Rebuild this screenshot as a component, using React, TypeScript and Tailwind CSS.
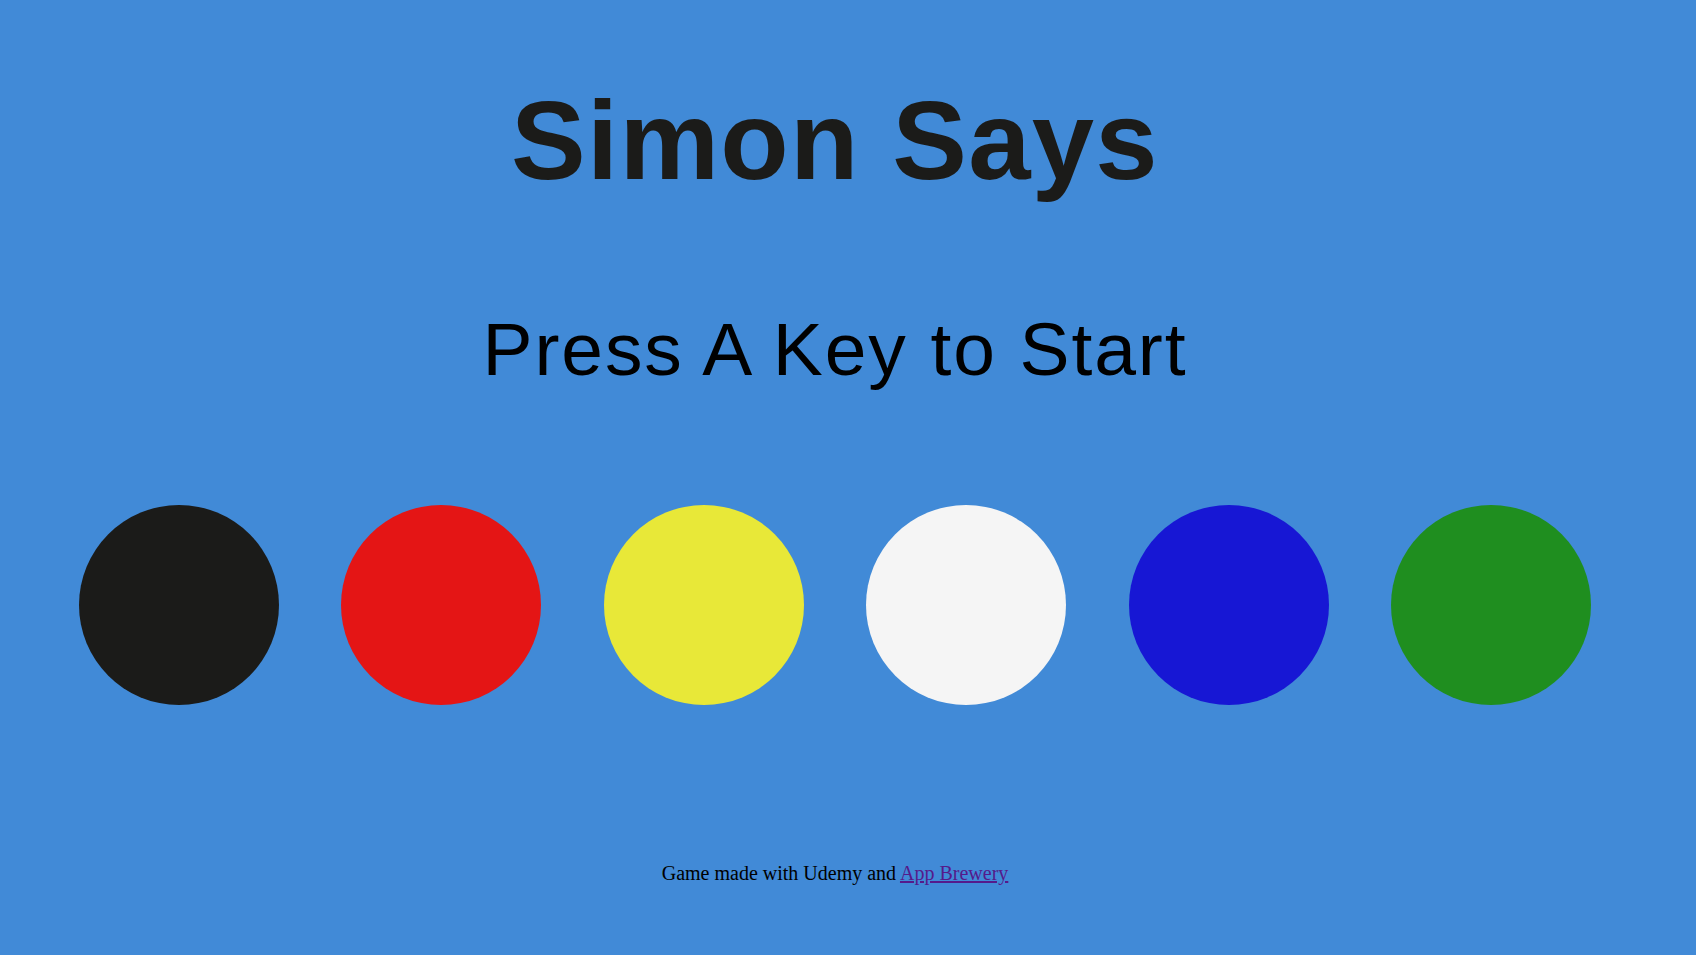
export default function App() {
  return (
    <div className="w-[1696px] h-[955px] bg-[#418ad7] overflow-hidden">
      <div className="w-[1670px] flex flex-col">
        <h1 className="mt-[85px] h-[112px] text-center text-[112px] leading-[112px] font-bold text-[#1b1b19] [font-family:'Liberation_Sans',Arial,sans-serif] tracking-[1.3px]">
          Simon Says
        </h1>
        <h2 className="mt-[115px] h-[75px] text-center text-[75px] leading-[75px] font-normal text-black [font-family:'Liberation_Sans',Arial,sans-serif] tracking-[1.9px]">
          Press A Key to Start
        </h2>
        <div className="mt-[118px] flex justify-center gap-[62.4px]">
          <div className="w-[200px] h-[200px] rounded-full shrink-0 bg-[#1b1b19]" />
          <div className="w-[200px] h-[200px] rounded-full shrink-0 bg-[#e41515]" />
          <div className="w-[200px] h-[200px] rounded-full shrink-0 bg-[#e8e838]" />
          <div className="w-[200px] h-[200px] rounded-full shrink-0 bg-[#f5f5f5]" />
          <div className="w-[200px] h-[200px] rounded-full shrink-0 bg-[#1717d4]" />
          <div className="w-[200px] h-[200px] rounded-full shrink-0 bg-[#1f8e1f]" />
        </div>
        <p className="mt-[158px] text-center text-[20px] leading-[20px] text-black [font-family:'Liberation_Serif','Times_New_Roman',serif]">
          Game made with Udemy and{" "}
          <a href="#" className="underline text-[#551a8b]">
            App Brewery
          </a>
        </p>
      </div>
    </div>
  );
}
